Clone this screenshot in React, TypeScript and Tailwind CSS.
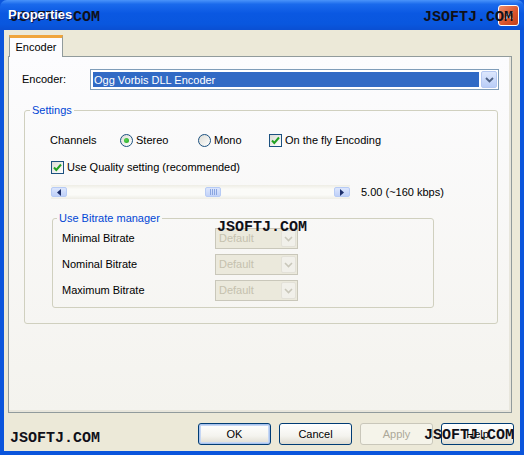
import React from 'react';

function Watermark({ className }: { className: string }) {
  return (
    <span
      className={`pointer-events-none absolute font-['Liberation_Mono',monospace] text-[15px] font-bold leading-none text-[#101018] ${className}`}
    >
      JSOFTJ.COM
    </span>
  );
}

function Radio({ checked, label }: { checked?: boolean; label: string }) {
  return (
    <div className="flex items-center">
      <span className="flex h-[13px] w-[13px] items-center justify-center rounded-full border border-[#1c5180] bg-[linear-gradient(135deg,#dcdcd5,#ffffff)]">
        {checked && (
          <span className="h-[5px] w-[5px] rounded-full bg-[radial-gradient(circle_at_40%_40%,#55d551,#21a121)]" />
        )}
      </span>
      <span className="ml-[3px]">{label}</span>
    </div>
  );
}

function Check({ label }: { label: string }) {
  return (
    <div className="flex items-center">
      <span className="flex h-[13px] w-[13px] items-center justify-center border border-[#1c5180] bg-[linear-gradient(135deg,#dcdcd5,#ffffff)]">
        <svg width="11" height="11" viewBox="0 0 11 11">
          <path d="M2 5.5 L4.3 8 L9 2.5" fill="none" stroke="#21a121" strokeWidth="2" />
        </svg>
      </span>
      <span className="ml-[3px]">{label}</span>
    </div>
  );
}

function DisabledCombo() {
  return (
    <div className="flex h-[21px] w-[83px] border border-[#c9c7ba] bg-[#ebe9dc] p-[1px]">
      <span className="flex-1 pl-[2px] leading-[17px] text-[#c5c1ae]">Default</span>
      <span className="flex w-[15px] items-center justify-center rounded-[2px] border border-[#e3e1d8] bg-[#f1f0ea]">
        <svg width="9" height="6" viewBox="0 0 9 6">
          <path d="M1 1 L4.5 4.5 L8 1" fill="none" stroke="#c9c7ba" strokeWidth="1.6" />
        </svg>
      </span>
    </div>
  );
}

function ScrollArrow({ dir }: { dir: 'l' | 'r' }) {
  return (
    <span className="my-[2px] flex w-[16px] items-center justify-center rounded-[2px] border border-[#b7cbf5] bg-[linear-gradient(to_bottom,#dce6fd,#bfd0f8)]">
      <svg width="4" height="7" viewBox="0 0 4 7">
        <path d={dir === 'l' ? 'M4 0 L0 3.5 L4 7 Z' : 'M0 0 L4 3.5 L0 7 Z'} fill="#1d2f6b" />
      </svg>
    </span>
  );
}

function XPButton({ label, focused, disabled }: { label: string; focused?: boolean; disabled?: boolean }) {
  const base = 'flex h-[22px] w-[73px] items-center justify-center rounded-[3px] border';
  if (disabled)
    return <div className={`${base} border-[#c9c7ba] bg-[#f5f4ea] text-[#aca899]`}>{label}</div>;
  return (
    <div
      className={`${base} border-[#003c74] bg-[linear-gradient(to_bottom,#ffffff,#f4f3ee_60%,#dedbd0)] ${
        focused ? 'shadow-[inset_0_0_0_1px_#a9c3ee,inset_0_0_0_2px_#c6d7f4]' : ''
      }`}
    >
      {label}
    </div>
  );
}

export default function App() {
  return (
    <div className="relative h-[455px] w-[524px] overflow-hidden bg-[#0b55dc] font-['Liberation_Sans',sans-serif] text-[11px] text-black">
      <div className="flex h-[30px] items-center justify-between rounded-t-[7px] bg-[linear-gradient(to_bottom,#4a94fa_0%,#1a6aec_14%,#0a58e2_45%,#0957de_80%,#0a4fd2_100%)] pl-[8px] pr-[5px]">
        <span className="relative z-10 text-[13px] font-bold text-white [text-shadow:1px_1px_0_#0a1e6e]">Properties</span>
        <span className="flex h-[21px] w-[21px] items-center justify-center rounded-[3px] border border-white bg-[linear-gradient(135deg,#ee8e6c,#d9532a_60%,#c3411b)]">
          <svg width="11" height="11" viewBox="0 0 11 11">
            <path d="M2 2 L9 9 M9 2 L2 9" stroke="white" strokeWidth="2" />
          </svg>
        </span>
      </div>

      <div className="mx-[4px] flex h-[421px] flex-col bg-[#ece9d8]">
        <div className="mt-[5px] flex h-[21px] pl-[5px]">
          <div className="relative z-10 flex h-[22px] w-[54px] items-center justify-center border-x border-t-[3px] border-x-[#919b9c] border-t-[#f0a53c] bg-[#fcfcfe] pb-[1px]">
            Encoder
          </div>
        </div>

        <div className="ml-[4px] flex h-[357px] w-[504px] flex-col border border-[#919b9c] bg-[linear-gradient(to_bottom,#fcfcfe,#f4f3ee)] shadow-[inset_-2px_-2px_0_#e8e6dc]">
          <div className="mt-[12px] flex h-[21px] items-center pl-[13px]">
            <span className="w-[68px]">Encoder:</span>
            <div className="flex h-[21px] w-[409px] border border-[#7f9db9] bg-white p-[1px]">
              <span className="m-[1px] flex-1 bg-[#316ac5] pl-[1px] leading-[17px] text-white">Ogg Vorbis DLL Encoder</span>
              <span className="ml-[1px] flex w-[16px] items-center justify-center rounded-[2px] border border-[#b5c8f2] bg-[linear-gradient(to_bottom,#dde7fd,#b9cdf7)]">
                <svg width="9" height="6" viewBox="0 0 9 6">
                  <path d="M1 1 L4.5 4.5 L8 1" fill="none" stroke="#4d6185" strokeWidth="1.8" />
                </svg>
              </span>
            </div>
          </div>

          <fieldset className="ml-[15px] mt-[14px] w-[474px] rounded-[3px] border border-[#d0d0bf] pb-[15px]">
            <legend className="ml-[5px] px-[2px] leading-[13px] text-[#0046d5]">Settings</legend>

            <div className="mt-[15px] flex h-[16px] items-center pl-[25px]">
              <span className="w-[70px]">Channels</span>
              <div className="w-[78px]">
                <Radio checked label="Stereo" />
              </div>
              <div className="w-[71px]">
                <Radio label="Mono" />
              </div>
              <Check label="On the fly Encoding" />
            </div>

            <div className="mt-[11px] flex h-[16px] items-center pl-[26px]">
              <Check label="Use Quality setting (recommended)" />
            </div>

            <div className="mt-[10px] flex h-[14px] items-center pl-[26px]">
              <div className="flex h-[14px] w-[299px] bg-[linear-gradient(to_bottom,#eeede5,#fbfbf8_30%,#fbfbf8_70%,#eeede5)]">
                <ScrollArrow dir="l" />
                <div className="flex flex-1">
                  <span className="my-[2px] ml-[138px] flex w-[16px] items-center justify-center gap-[1px] rounded-[2px] border border-[#b7cbf5] bg-[linear-gradient(to_bottom,#dce6fd,#c3d3f8)]">
                    <span className="h-[6px] w-px bg-[#8aa5e0]" />
                    <span className="h-[6px] w-px bg-[#8aa5e0]" />
                    <span className="h-[6px] w-px bg-[#8aa5e0]" />
                    <span className="h-[6px] w-px bg-[#8aa5e0]" />
                  </span>
                </div>
                <ScrollArrow dir="r" />
              </div>
              <span className="ml-[11px]">5.00 (~160 kbps)</span>
            </div>

            <fieldset className="ml-[27px] mt-[13px] w-[382px] rounded-[3px] border border-[#d0d0bf] pb-[6px]">
              <legend className="ml-[4px] px-[2px] leading-[13px] text-[#0046d5]">Use Bitrate manager</legend>
              <div className="mt-[3px] flex flex-col gap-[5px] pl-[9px]">
                {['Minimal Bitrate', 'Nominal Bitrate', 'Maximum Bitrate'].map((l) => (
                  <div key={l} className="flex h-[21px] items-center">
                    <span className="w-[153px]">{l}</span>
                    <DisabledCombo />
                  </div>
                ))}
              </div>
            </fieldset>
          </fieldset>
        </div>

        <div className="mt-[10px] flex justify-end gap-[8px] pr-[6px]">
          <XPButton label="OK" focused />
          <XPButton label="Cancel" />
          <XPButton label="Apply" disabled />
          <XPButton label="Help" />
        </div>
      </div>

      <Watermark className="left-[10px] top-[10px]" />
      <Watermark className="left-[423px] top-[10px]" />
      <Watermark className="left-[217px] top-[220px]" />
      <Watermark className="left-[10px] top-[431px]" />
      <Watermark className="left-[424px] top-[428px]" />
    </div>
  );
}
